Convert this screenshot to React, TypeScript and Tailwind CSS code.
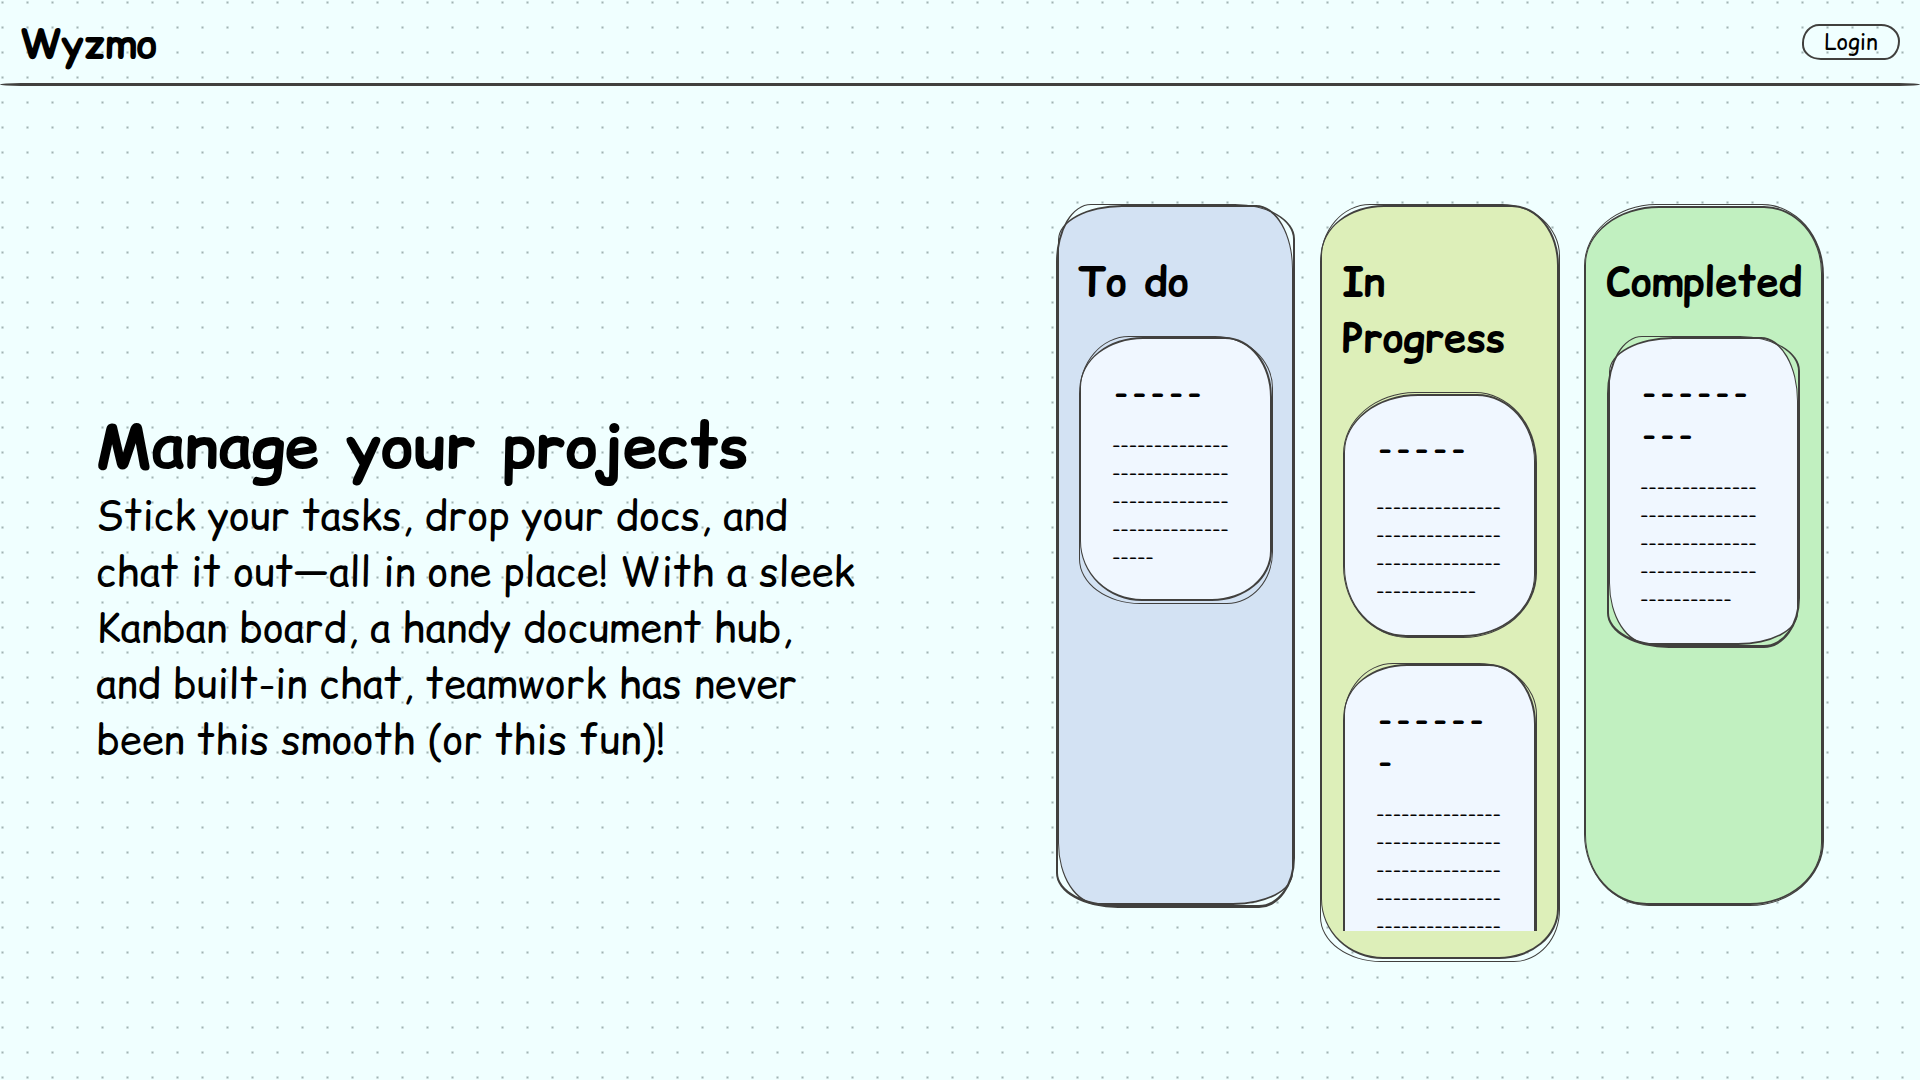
type Shape = 'a' | 'b' | 'c';

const fills: Record<Shape, string> = {
  a: 'top-px right-[3px] -bottom-px left-[2px] border-x border-y-2 rounded-[64px_37px_60px_40px/35px_64px_32px_62px]',
  b: 'top-px right-px bottom-px left-px border-2 border-l rounded-[63px_47px_60px_62px/50px_60px_50px_60px]',
  c: 'top-[2px] right-[2px] -bottom-px left-px border-x border-y-2 rounded-[74px_58px_72px_62px/58px_67px_62px_70px]',
};

const strokes: Record<Shape, string> = {
  a: 'top-0 right-px -bottom-1 left-0 border-t border-r-2 border-b-[3px] border-l-2 rounded-[35px_60px_36px_62px/58px_35px_50px_35px]',
  b: 'top-0 right-0 -bottom-[2px] left-0 border rounded-[50px_58px_46px_61px/58px_52px_52px_45px]',
  c: 'top-0 right-0 -bottom-[2px] left-0 border border-r-2 rounded-[72px_62px_74px_65px/62px_71px_65px_72px]',
};

function Sketch({ shape, fill }: { shape: Shape; fill: string }) {
  return (
    <>
      <span aria-hidden="true" className={`absolute border-[#41403e] ${fills[shape]} ${fill}`} />
      <span aria-hidden="true" className={`absolute border-[#41403e] ${strokes[shape]}`} />
    </>
  );
}

type Note = { shape: Shape; title: string; body: string; gap: string };

const d = (...counts: number[]) => counts.map((n) => '-'.repeat(n)).join('\n');

const columns: { title: string; shape: Shape; fill: string; notes: Note[] }[] = [
  {
    title: 'To do',
    shape: 'a',
    fill: 'bg-[#d3e2f3]',
    notes: [{ shape: 'b', title: d(5), body: d(14, 14, 14, 14, 5), gap: 'gap-[18px]' }],
  },
  {
    title: 'In Progress',
    shape: 'b',
    fill: 'bg-[#ddefb9]',
    notes: [
      { shape: 'c', title: d(5), body: d(15, 15, 15, 12), gap: 'gap-6' },
      { shape: 'b', title: d(6, 1), body: d(15, 15, 15, 15, 15, 15, 8), gap: 'gap-[18px]' },
    ],
  },
  {
    title: 'Completed',
    shape: 'c',
    fill: 'bg-[#c1f0c0]',
    notes: [{ shape: 'a', title: d(6, 3), body: d(14, 14, 14, 14, 11), gap: 'gap-[18px]' }],
  },
];

function Card({ note }: { note: Note }) {
  return (
    <article className="relative shrink-0">
      <Sketch shape={note.shape} fill="bg-[#f0f7ff]" />
      <div className={`relative flex flex-col px-[33px] pt-[35px] pb-[31px] ${note.gap}`}>
        <h3 className="text-[30px] leading-[42px] font-bold whitespace-pre">{note.title}</h3>
        <p className="text-[20px] leading-[28px] whitespace-pre">{note.body}</p>
      </div>
    </article>
  );
}

export default function App() {
  return (
    <div className="flex min-h-screen flex-col bg-[#f0ffff] bg-[radial-gradient(circle,#a0b2b2_0px,#f0ffff_2px)] bg-[size:25px_25px] bg-[position:-10px_-10px] font-['Comic_Relief','Comic_Sans_MS','Comic_Neue',cursive] text-black">
      <header>
        <div className="flex items-center justify-between px-5 pt-4 pb-[11px]">
          <a href="#" className="text-[40px] leading-[56px] font-bold">
            Wyzmo
          </a>
          <button
            type="button"
            className="mb-1 h-9 min-w-[98px] rounded-[18px_20px_16px_20px/20px_18px_20px_16px] border-2 border-[#41403e] px-4 text-[22px] leading-[28px]"
          >
            Login
          </button>
        </div>
        <div className="h-[3px] rounded-[28px/2px] bg-[#41403e]" />
      </header>

      <main className="flex flex-1 items-center justify-between px-24 pb-[2px]">
        <section className="max-w-[768px]">
          <h1 className="pt-2 text-[62px] leading-[84px] font-bold">Manage your projects</h1>
          <p className="text-[40px] leading-[56px]">
            Stick your tasks, drop your docs, and chat it out—all in one place! With a sleek Kanban board, a handy
            document hub, and built-in chat, teamwork has never been this smooth (or this fun)!
          </p>
        </section>

        <section className="grid w-[768px] grid-cols-3 items-start gap-6">
          {columns.map((column) => (
            <div key={column.title} className="relative">
              <Sketch shape={column.shape} fill={column.fill} />
              <div className="relative px-[22px] pt-[50px] pb-[29px]">
                <h2 className="text-[40px] leading-[56px] font-bold">{column.title}</h2>
                <div className="mt-[26px] flex h-[539px] flex-col gap-[27px] overflow-hidden px-px">
                  {column.notes.map((note) => (
                    <Card key={note.body} note={note} />
                  ))}
                </div>
              </div>
            </div>
          ))}
        </section>
      </main>
    </div>
  );
}
